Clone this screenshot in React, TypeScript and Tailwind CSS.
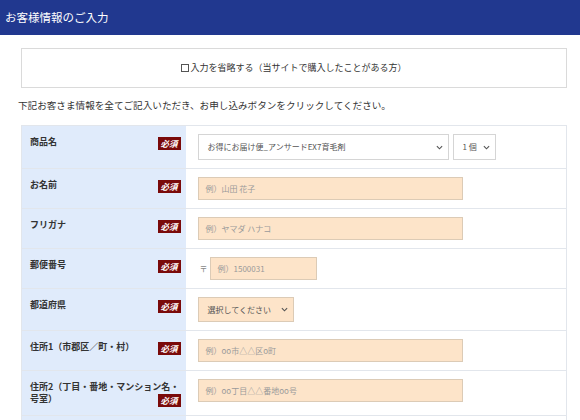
import React from "react";

const font = { fontFamily: '"Noto Sans CJK JP", "Noto Sans", sans-serif' };

function Badge() {
  return (
    <span className="float-right mt-[1px] inline-flex h-[13px] w-[23px] items-center justify-center bg-[#7a0a0a] text-[8.5px] leading-none text-white italic">
      必須
    </span>
  );
}

function Chevron() {
  return (
    <svg width="7" height="5" viewBox="0 0 8 5" className="shrink-0">
      <path d="M1 1 L4 4 L7 1" fill="none" stroke="#555" strokeWidth="1.3" />
    </svg>
  );
}

function Row({ label, children, badge = true }: { label: React.ReactNode; children: React.ReactNode; badge?: boolean }) {
  return (
    <tr className="border-b border-[#e2e6ec]">
      <td className="w-[164px] bg-[#e0ebfb] pl-[8px] pr-[5px] pt-[10px] pb-[8px] align-top text-[9px] leading-[12px] font-bold text-[#333]">
        {label}
        {badge && <Badge />}
      </td>
      <td className="bg-white pl-[12px] py-[8px] align-top">{children}</td>
    </tr>
  );
}

function TextInput({ ph, w = "w-[265px]" }: { ph: string; w?: string }) {
  return (
    <div className={`${w} flex h-[23px] items-center border border-[#dccbb6] bg-[#fde4c9] pl-[7px] text-[8px] text-[#9a9a9a]`}>
      {ph}
    </div>
  );
}

export default function App() {
  return (
    <div className="h-[420px] w-[580px] overflow-hidden bg-white" style={font}>
      <div className="flex h-[35px] items-center bg-[#21388f] pl-[5px] text-[11.5px] text-white">
        お客様情報のご入力
      </div>
      <div className="mx-[21px] mt-[13px] flex h-[40px] w-[546px] items-center justify-center border border-[#dadada] text-[9px] text-[#333]">
        <span className="mr-[1px] inline-block h-[8px] w-[8px] border border-[#555] bg-white" />
        入力を省略する（当サイトで購入したことがある方）
      </div>
      <div className="ml-[18px] mt-[10px] text-[9.6px] leading-[14px] text-[#333]">
        下記お客さま情報を全てご記入いただき、お申し込みボタンをクリックしてください。
      </div>
      <table className="ml-[21px] mt-[13px] w-[546px] border-collapse border border-[#e2e6ec]">
        <tbody>
          <Row label="商品名">
            <div className="flex gap-[4px]">
              <div className="flex h-[26px] w-[251px] items-center justify-between border border-[#d5d5d5] bg-white pl-[9px] pr-[5px] text-[8px] text-[#555]">
                <span>お得にお届け便_アンサードEX7育毛剤</span>
                <Chevron />
              </div>
              <div className="flex h-[26px] w-[43px] items-center justify-between border border-[#d5d5d5] bg-white pl-[9px] pr-[5px] text-[8px] text-[#555]">
                <span>1 個</span>
                <Chevron />
              </div>
            </div>
          </Row>
          <Row label="お名前">
            <TextInput ph="例）山田 花子" />
          </Row>
          <Row label="フリガナ">
            <TextInput ph="例）ヤマダ ハナコ" />
          </Row>
          <Row label="郵便番号">
            <div className="flex items-center">
              <span className="mr-[2px] ml-[2px] text-[8px] text-[#888]">〒</span>
              <TextInput ph="例）1500031" w="w-[107px]" />
            </div>
          </Row>
          <Row label="都道府県">
            <div className="flex h-[25px] w-[96px] items-center justify-between border border-[#dccbb6] bg-[#fde4c9] pl-[9px] pr-[5px] text-[8px] text-[#555]">
              <span>選択してください</span>
              <Chevron />
            </div>
          </Row>
          <Row label="住所1（市郡区／町・村）">
            <TextInput ph="例）oo市△△区o町" />
          </Row>
          <Row label="住所2（丁目・番地・マンション名・号室）">
            <TextInput ph="例）oo丁目△△番地oo号" />
          </Row>
          <Row label="" badge={false}>
            <div className="h-[23px]" />
          </Row>
        </tbody>
      </table>
    </div>
  );
}
